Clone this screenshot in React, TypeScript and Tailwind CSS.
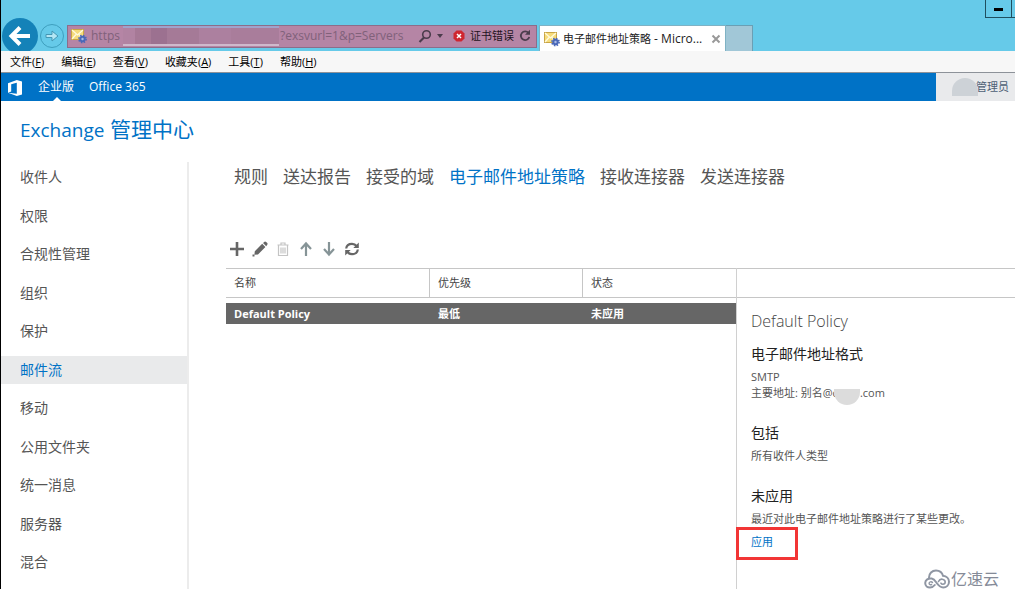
import React from 'react';

const navItems = ['收件人', '权限', '合规性管理', '组织', '保护', '邮件流', '移动', '公用文件夹', '统一消息', '服务器', '混合'];

const tabs = ['规则', '送达报告', '接受的域', '电子邮件地址策略', '接收连接器', '发送连接器'];

const menus = [
  { label: '文件', hotkey: 'F' },
  { label: '编辑', hotkey: 'E' },
  { label: '查看', hotkey: 'V' },
  { label: '收藏夹', hotkey: 'A' },
  { label: '工具', hotkey: 'T' },
  { label: '帮助', hotkey: 'H' },
];

const MailIcon: React.FC = () => (
  <svg viewBox="0 0 16 16" className="w-4 h-4 shrink-0">
    <rect x="0.5" y="1.5" width="12" height="10" fill="#f6dc7c" stroke="#c9a545" />
    <path d="M1 2l5.500 5L12 2M1 11l4-4.500M12 11L8 6.500" fill="none" stroke="#fffbe0" strokeWidth="1.200" />
    <circle cx="11.500" cy="11" r="3.200" fill="#4a68b8" />
    <circle cx="11.500" cy="11" r="3.600" fill="none" stroke="#4a68b8" strokeWidth="1.600" strokeDasharray="1.500 1.330" />
    <circle cx="11.500" cy="11" r="1.200" fill="#a9bce6" />
  </svg>
);

const CloudIcon: React.FC = () => (
  <svg viewBox="0 0 26 20" className="w-[26px] h-5" fill="none" stroke="#8f96a3" strokeWidth="2" strokeLinecap="round">
    <path d="M5 8.500C5 4.500 8 1.500 12 1.500c3.500 0 6.200 2.200 7 5.300 3.500.3 6 2.700 6 5.900 0 3.300-2.500 5.800-5.800 5.800-3.400 0-5-2.200-6.700-4.700-1.200-1.800-2.300-3.800-4.800-4.300C4.300 9 1.200 11 1.200 14s2.300 4.500 4.800 4.500c2.200 0 3.600-1 4.800-2.500" />
    <path d="M8.500 13.500c-1-1.300-3.400-.8-3.400.8 0 1.300 1.400 1.700 2.500 1.200" strokeWidth="1.400" />
    <path d="M14.500 12.500c.8-1.800 2.300-2.500 3.800-2.300 1.700.2 2.900 1.400 2.900 2.900 0 1.400-1 2.200-2.300 2.200-1 0-1.600-.5-2-1.200" strokeWidth="1.600" />
  </svg>
);

const BrowserBar: React.FC = () => (
  <header className="flex items-start h-[51px] pt-[18px] pl-px bg-[#66cae9] overflow-hidden relative">
    <div className="flex items-center h-9">
      <button aria-label="后退" className="flex items-center justify-center w-9 h-9 rounded-full bg-[#1482b8]">
        <svg viewBox="0 0 24 24" className="w-6 h-6" fill="none" stroke="white" strokeWidth="4">
          <path d="M22 12H4M12 3.500L3.500 12l8.500 8.500" />
        </svg>
      </button>
      <button aria-label="前进" className="flex items-center justify-center w-6 h-6 ml-[2px] rounded-full border border-[#3e9fbe]">
        <svg viewBox="0 0 16 16" className="w-4 h-4">
          <path d="M2 6.500h6V3l6 5-6 5V9.500H2z" fill="#b4e6f4" stroke="#4497b4" />
        </svg>
      </button>
      <div className="flex items-center w-[470px] h-[23px] ml-[3px] pl-[3px] pr-1 bg-[#b585a5] border border-[#8c6d8a] text-[12px]">
        <MailIcon />
        <span className="ml-1 text-[#80617a]">https</span>
        {/* masked host name */}
        <div className="flex w-[156px] h-5 ml-[3px] border-y-2 border-t-[#9fa3cb] border-b-[#cfb9cc]">
          <div className="w-3 bg-[#b183a2]" />
          <div className="w-4 bg-[#a67996]" />
          <div className="w-4 bg-[#9c7190]" />
          <div className="w-8 bg-[#a57a97]" />
          <div className="w-8 bg-[#ac809f]" />
          <div className="flex-1 bg-[#a97d9b]" />
        </div>
        <input
          aria-label="地址"
          defaultValue="?exsvurl=1&p=Servers"
          className="flex-1 min-w-0 pl-px bg-transparent text-[#80617a] outline-none"
        />
        <button aria-label="搜索">
          <svg viewBox="0 0 14 14" className="w-[14px] h-[14px]" fill="none" stroke="#4b3c4c" strokeWidth="1.600">
            <circle cx="8.500" cy="5.500" r="3.800" />
            <path d="M6 8.500L1.500 13" strokeWidth="2.200" />
          </svg>
        </button>
        <button aria-label="显示地址列表" className="ml-1">
          <svg viewBox="0 0 8 8" className="w-2 h-2"><path d="M1 2h6L4 6z" fill="#4b3c4c" /></svg>
        </button>
        <button className="flex items-center ml-[9px] gap-[5px] text-[11px] text-[#1d1320]">
          <svg viewBox="0 0 12 12" className="w-3 h-3">
            <path d="M3.500 0.500h5l3 3v5l-3 3h-5l-3-3v-5z" fill="#cf2630" />
            <path d="M4 4l4 4M8 4L4 8" stroke="white" strokeWidth="1.500" />
          </svg>
          证书错误
        </button>
        <button aria-label="刷新" className="ml-1">
          <svg viewBox="0 0 14 14" className="w-[14px] h-[14px]" fill="none" stroke="#4b3c4c" strokeWidth="1.800">
            <path d="M10.500 4A4.300 4.300 0 1 0 11.300 8" />
            <path d="M12 0.800v5H7z" fill="#4b3c4c" stroke="none" />
          </svg>
        </button>
      </div>
    </div>
    <div className="flex h-[26px] mt-[7px] ml-[2px]">
      <div className="flex items-center w-[187px] px-1 bg-white border border-b-0 border-[#7fb2c4] text-[12px] text-[#222]">
        <MailIcon />
        <span className="ml-[3px] flex-1 whitespace-nowrap">
          <span className="text-[11px]">电子邮件地址策略</span> - Micro...
        </span>
        <button aria-label="关闭标签页">
          <svg viewBox="0 0 10 10" className="w-[10px] h-[10px]"><path d="M1.500 1.500l7 7M8.500 1.500l-7 7" stroke="#999" strokeWidth="2" /></svg>
        </button>
      </div>
      <button aria-label="新建标签页" className="w-[27px] bg-[#a1c7d7] border border-l-0 border-b-0 border-[#6a9fb4]" />
    </div>
    {/* Window controls */}
    <div className="absolute top-0 right-0 flex h-[18px] border-l border-b border-[#1f4f5f]">
      <button aria-label="最小化" className="flex items-center justify-center w-[26px] border-r border-[#1f4f5f]">
        <span className="w-[9px] h-[3px] mt-[2px] bg-black" />
      </button>
      <span className="w-[3px]" />
    </div>
  </header>
);

const Toolbar: React.FC = () => (
  <div className="flex items-center gap-[7px] mt-[52px] ml-[3px] text-[#666]">
    <button aria-label="新建">
      <svg viewBox="0 0 16 16" className="w-4 h-4"><path d="M8 1v14M1 8h14" stroke="currentColor" strokeWidth="2.600" /></svg>
    </button>
    <button aria-label="编辑">
      <svg viewBox="0 0 16 16" className="w-4 h-4" fill="currentColor">
        <path d="M2.800 10.200l7.400-7.400 3.200 3.200L6 13.400l-3.600.4zM11 2l1.500-1.300q.8-.5 1.600.2l1.200 1.200q.6.800 0 1.600L14.200 5.200z" />
        <path d="M0.500 13.500h2v2h-2z" />
      </svg>
    </button>
    <button aria-label="删除" className="text-[#c4c4c4]">
      <svg viewBox="0 0 16 16" className="w-4 h-4" fill="none" stroke="currentColor" strokeWidth="1.200">
        <path d="M2.500 4h11M6 4V2h4v2M3.500 4.500v10h9v-10M6 6.500v6M8 6.500v6M10 6.500v6" />
      </svg>
    </button>
    <button aria-label="上移" className="text-[#869497]">
      <svg viewBox="0 0 16 16" className="w-4 h-4" fill="none" stroke="currentColor" strokeWidth="2.200"><path d="M8 15V3M3 8l5-5.500L13 8" /></svg>
    </button>
    <button aria-label="下移" className="text-[#869497]">
      <svg viewBox="0 0 16 16" className="w-4 h-4" fill="none" stroke="currentColor" strokeWidth="2.200"><path d="M8 1v12M3 8l5 5.500L13 8" /></svg>
    </button>
    <button aria-label="刷新">
      <svg viewBox="0 0 16 16" className="w-4 h-4" fill="none" stroke="currentColor" strokeWidth="2.200">
        <path d="M2.200 7.500C2.500 4.500 5 2.800 8 2.800c2 0 3.500.8 4.500 2.200M13.800 8.500c-.3 3-2.800 4.700-5.800 4.700-2 0-3.500-.8-4.500-2.200" />
        <path d="M14.800 1.500v5.500H9.300zM1.200 14.500V9h5.500z" fill="currentColor" stroke="none" />
      </svg>
    </button>
  </div>
);

const PolicyTable: React.FC = () => (
  <table className="w-[510px] shrink-0 self-start table-fixed border-separate border-spacing-0 text-left text-[11px] leading-4">
    <thead>
      <tr className="h-[30px] text-[#444]">
        <th className="w-[204px] pl-2 font-normal border-y border-r border-[#c6c6c6]">名称</th>
        <th className="w-[153px] pl-2 font-normal border-y border-r border-[#c6c6c6]">优先级</th>
        <th className="pl-2 font-normal border-y border-[#c6c6c6]">状态</th>
      </tr>
    </thead>
    <tbody className="before:block before:h-[5px] before:content-['']">
      <tr className="h-[21px] bg-[#666] text-white font-bold">
        <td className="pl-2">Default Policy</td>
        <td className="pl-2">最低</td>
        <td className="pl-2">未应用</td>
      </tr>
    </tbody>
  </table>
);

const Details: React.FC = () => (
  <section className="flex-1 flex flex-col min-w-0 border-l border-[#d0d0d0] text-[11px] leading-4 text-[#555]">
    <div className="h-[30px] border-t border-b border-[#c6c6c6]" />
    <div className="pt-[11px] pl-[14px]">
      <h2 className="text-[16px] leading-6 font-light text-[#444]">Default Policy</h2>
      <h3 className="mt-[11px] text-[14px] leading-5 text-[#222]">电子邮件地址格式</h3>
      <p className="mt-[5px]">SMTP</p>
      <p className="flex h-4">
        主要地址: 别名@c
        <span className="w-[26px] h-4 mt-1 -ml-1 rounded-b-full bg-[#dcdcdc]" />
        .com
      </p>
      <h3 className="mt-[22px] text-[14px] leading-5 text-[#222]">包括</h3>
      <p className="mt-[5px]">所有收件人类型</p>
      <h3 className="mt-[22px] text-[14px] leading-5 text-[#222]">未应用</h3>
      <p className="mt-[5px] whitespace-nowrap">最近对此电子邮件地址策略进行了某些更改。</p>
      <div className="relative mt-[7px]">
        <a href="#apply" className="text-[#0072c6]">应用</a>
        <span className="absolute -left-[15px] -top-[7px] w-[62px] h-[33px] border-3 border-[#f23535] pointer-events-none" />
      </div>
    </div>
  </section>
);

const App: React.FC = () => {
  return (
    <div className="flex flex-col min-h-screen pb-[2px] bg-white font-['Open_Sans','Noto_Sans_CJK_SC',sans-serif]">
      <div className="relative flex flex-col flex-1 border-l border-black">
        <BrowserBar />

        {/* Menu bar */}
        <nav className="flex items-center gap-[17px] h-[22px] pt-px pl-[9px] bg-[#f7f7f7] border-b border-[#8d9299] text-[11px] text-black">
          {menus.map((menu) => (
            <button key={menu.hotkey}>
              {menu.label}(<span className="underline">{menu.hotkey}</span>)
            </button>
          ))}
        </nav>

        {/* Office bar */}
        <div className="flex h-7 bg-[#0072c6] text-[12px] text-white">
          <svg viewBox="0 0 14 16" className="w-[14px] h-4 ml-[7px] mt-[7px]">
            <path d="M0 3.200L8.800 0 14 1.500v13L8.800 16 0 12.800l8.800 1V2.800L3.200 4.200v7.200L0 12.800z" fill="white" />
          </svg>
          <a href="#enterprise" className="relative ml-4 leading-7">
            企业版
            <span className="absolute bottom-0 left-[15px] border-x-4 border-b-4 border-x-transparent border-b-white" />
          </a>
          <a href="#office365" className="ml-[15px] leading-7">Office 365</a>
          <button className="flex items-center w-[79px] ml-auto pl-4 bg-[#e9eaec] text-[11px] text-[#4d6075]">
            <span className="w-[26px] h-[18px] -mr-[2px] rounded-t-full bg-[#cdd2d7] z-10" />
            管理员
          </button>
        </div>

        <h1 className="pt-[14px] pb-[18px] pl-[19px] text-[21px] leading-7 text-[#0072c6]">
          <span className="text-[19px]">Exchange</span> 管理中心
        </h1>

        <div className="flex flex-1">
          <nav className="w-[188px] shrink-0 pt-px border-r-2 border-[#ececec]">
            <ul className="flex flex-col justify-between h-[413px] text-[14px] leading-7">
              {navItems.map((item) => (
                <li key={item}>
                  <a
                    href="#nav"
                    className={`block pl-[19px] ${item === '邮件流' ? 'bg-[#e9eaeb] text-[#0072c6]' : 'text-[#555]'}`}
                  >
                    {item}
                  </a>
                </li>
              ))}
            </ul>
          </nav>

          <main className="flex flex-col flex-1 min-w-0 pt-[3px] pl-[37px]">
            <div className="flex gap-[15px] pl-2 text-[17px] leading-6">
              {tabs.map((tab) => (
                <a key={tab} href="#tab" className={tab === '电子邮件地址策略' ? 'text-[#0072c6]' : 'text-[#555]'}>
                  {tab}
                </a>
              ))}
            </div>
            <Toolbar />
            <div className="flex flex-1 mt-[11px]">
              <PolicyTable />
              <Details />
            </div>
          </main>
        </div>

        {/* Watermark */}
        <div className="absolute right-4 bottom-0 flex items-center gap-px text-[16px] leading-5 text-[#858b98]">
          <CloudIcon />
          亿速云
        </div>
      </div>
    </div>
  );
};

export default App;
